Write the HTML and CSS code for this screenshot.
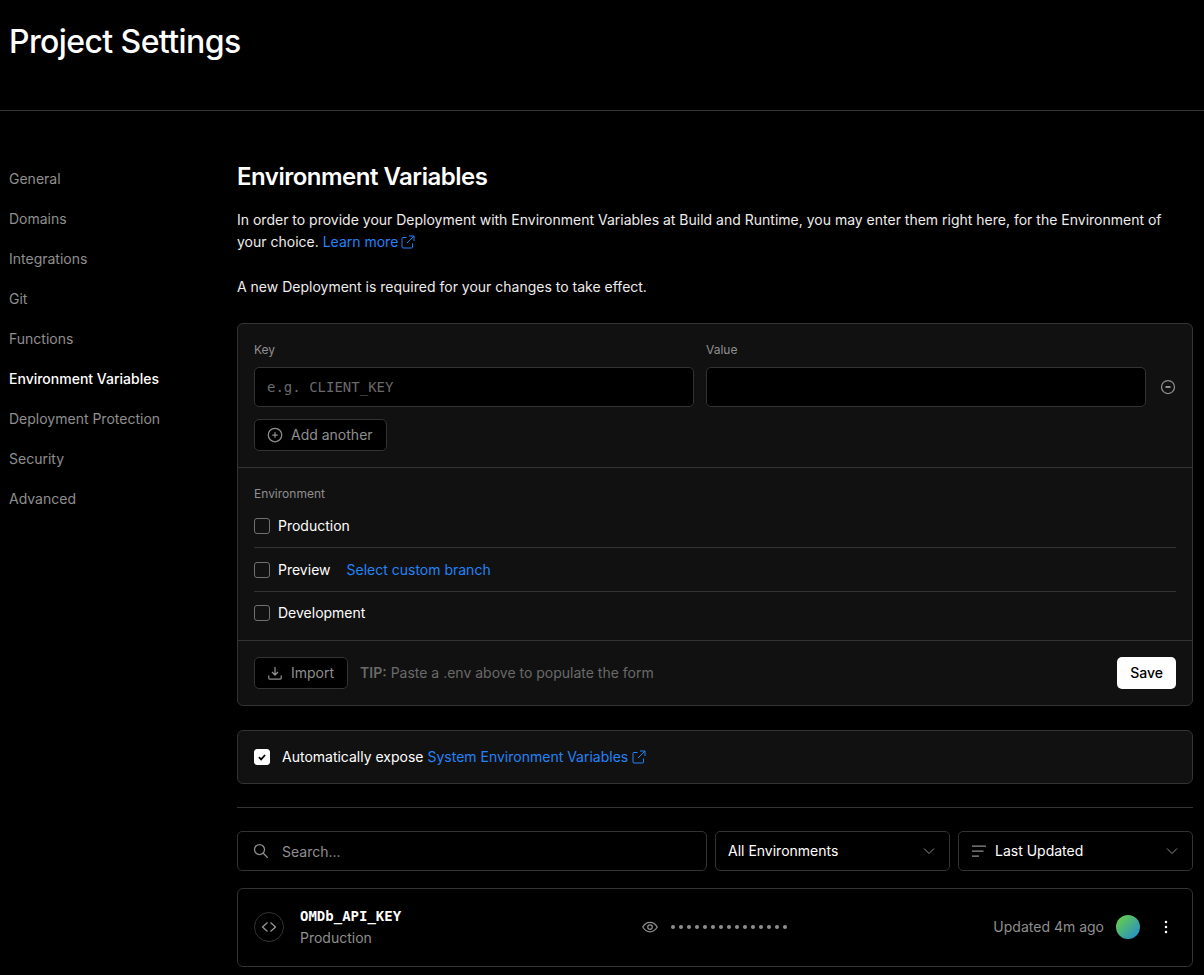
FILE: index.html
```html
<!DOCTYPE html>
<html lang="en">
  <head>
    <meta charset="UTF-8" />
    <meta name="viewport" content="width=device-width, initial-scale=1.0" />
    <title>Project Settings</title>
    <link rel="stylesheet" href="styles.css">
  </head>

  <body>
    <header class="page-head">
      <h1>Project Settings</h1>
    </header>

    <div class="layout">
      <nav class="sidenav">
        <a href="#">General</a>
        <a href="#">Domains</a>
        <a href="#">Integrations</a>
        <a href="#">Git</a>
        <a href="#">Functions</a>
        <a href="#" class="active">Environment Variables</a>
        <a href="#">Deployment Protection</a>
        <a href="#">Security</a>
        <a href="#">Advanced</a>
      </nav>

      <main class="content">
        <h2>Environment Variables</h2>
        <p class="intro">
          In order to provide your Deployment with Environment Variables at Build and Runtime, you may enter them right here, for the Environment of<br />
          your choice.
          <a href="#" class="link">Learn more <svg class="ext" viewBox="0 0 16 16"><path d="M6.5 3.5H3a1 1 0 0 0-1 1V13a1 1 0 0 0 1 1h8.5a1 1 0 0 0 1-1V9.5M9 2h5v5M14 2 7 9"/></svg></a>
        </p>
        <p class="intro note">A new Deployment is required for your changes to take effect.</p>

        <section class="card">
          <div class="fields">
            <div class="field-row">
              <div class="field">Key <div class="mono-input empty">e.g. CLIENT_KEY</div></div>
              <div class="field">Value <div class="mono-input"></div></div>
              <svg class="remove" viewBox="0 0 16 16"><circle cx="8" cy="8" r="6.5"/><path class="minus" d="M5.5 8h5"/></svg>
            </div>
            <button class="btn" type="button">
              <svg class="icon" viewBox="0 0 16 16"><circle cx="8" cy="8" r="6.75"/><path d="M8 5.25v5.5M5.25 8h5.5"/></svg>
              Add another
            </button>
          </div>

          <div class="envs">
            <div class="small-label">Environment</div>
            <div class="env-row"><span class="check"></span>Production</div>
            <div class="env-row"><span class="check"></span>Preview <a href="#" class="link branch">Select custom branch</a></div>
            <div class="env-row last"><span class="check"></span>Development</div>
          </div>

          <div class="card-foot">
            <button class="btn import" type="button">
              <svg class="icon" viewBox="0 0 16 16"><path d="M8 2v7.5M5 7l3 3 3-3M1.75 10.5v2.5a1 1 0 0 0 1 1h10.5a1 1 0 0 0 1-1v-2.5"/></svg>
              Import
            </button>
            <span class="tip"><b>TIP:</b> Paste a .env above to populate the form</span>
            <button class="save" type="button">Save</button>
          </div>
        </section>

        <section class="card expose">
          <span class="check on"><svg viewBox="0 0 16 16"><path d="M4.5 8.25 7 10.75l4.5-5"/></svg></span>
          Automatically expose&nbsp;<a href="#" class="link">System Environment Variables <svg class="ext" viewBox="0 0 16 16"><path d="M6.5 3.5H3a1 1 0 0 0-1 1V13a1 1 0 0 0 1 1h8.5a1 1 0 0 0 1-1V9.5M9 2h5v5M14 2 7 9"/></svg></a>
        </section>

        <hr class="rule" />

        <div class="filters">
          <label class="search">
            <svg class="icon" viewBox="0 0 16 16"><circle cx="6.5" cy="6.5" r="5"/><path d="m10.25 10.25 4.5 4.5"/></svg>
            <input type="text" placeholder="Search..." />
          </label>
          <div class="select">
            All Environments
            <svg class="chev" viewBox="0 0 16 16"><path d="M3 5.5 8 10.5 13 5.5"/></svg>
          </div>
          <div class="select">
            <svg class="icon" viewBox="0 0 16 16"><path d="M1 3h14M1 8h11.5M1 13h7"/></svg>
            <span class="select-text">Last Updated</span>
            <svg class="chev" viewBox="0 0 16 16"><path d="M3 5.5 8 10.5 13 5.5"/></svg>
          </div>
        </div>

        <div class="var-row">
          <span class="code-badge"><svg viewBox="0 0 16 16"><path d="M6.5 3.5 1.5 8l5 4.5M9.5 3.5l5 4.5-5 4.5"/></svg></span>
          <div class="var-name">
            <strong>OMDb_API_KEY</strong>
            <span>Production</span>
          </div>
          <div class="var-value">
            <svg class="icon" viewBox="0 0 16 16"><path d="M.75 8S3.5 3.25 8 3.25 15.25 8 15.25 8 12.5 12.75 8 12.75.75 8 .75 8Z"/><circle cx="8" cy="8" r="2.25"/></svg>
            <span class="dots">
              <i></i><i></i><i></i><i></i><i></i><i></i><i></i><i></i><i></i><i></i><i></i><i></i><i></i><i></i><i></i>
            </span>
          </div>
          <div class="var-meta">
            <span>Updated 4m ago</span>
            <span class="avatar"></span>
            <svg class="more" viewBox="0 0 16 16"><circle cx="8" cy="3" r="1.25"/><circle cx="8" cy="8" r="1.25"/><circle cx="8" cy="13" r="1.25"/></svg>
          </div>
        </div>
      </main>
    </div>
  </body>
</html>
```

FILE: styles.css
```css
* {
  box-sizing: border-box;
}

body {
  margin: 0;
  background: #000;
  color: #ededed;
  font-family: Inter, "Liberation Sans", sans-serif;
  font-size: 14px;
  line-height: 20px;
}

a {
  text-decoration: none;
}

svg {
  fill: none;
  stroke: currentColor;
  stroke-width: 1.25;
  flex-shrink: 0;
}

.page-head {
  height: 111px;
  padding: 20px 9px 0;
  border-bottom: 1px solid #333;
}

.page-head h1 {
  margin: 0;
  font-size: 32px;
  line-height: 44px;
  font-weight: 500;
  letter-spacing: -0.6px;
  color: #fff;
}

.layout {
  display: flex;
  padding: 48px 11px 0 9px;
}

.sidenav {
  width: 228px;
  flex-shrink: 0;
  display: flex;
  flex-direction: column;
}

.sidenav a {
  height: 40px;
  line-height: 40px;
  color: #8f8f8f;
}

.sidenav a.active {
  color: #fff;
  font-weight: 500;
}

.content {
  flex: 1;
  min-width: 0;
}

.content h2 {
  margin: 0 0 14px;
  font-size: 24px;
  line-height: 36px;
  font-weight: 600;
  letter-spacing: -0.5px;
  color: #fff;
}

.intro {
  margin: 0;
  line-height: 22px;
  color: #ededed;
}

.note {
  margin-top: 23px;
}

.link {
  color: #2483f7;
}

.ext {
  width: 16px;
  height: 16px;
  margin-left: -1px;
  vertical-align: -3px;
  stroke-width: 1;
}

.intro .ext {
  margin-left: -2px;
}

.card {
  background: #111;
  border: 1px solid #333;
  border-radius: 6px;
}

.note + .card {
  margin-top: 25px;
}

.fields {
  padding: 17px 16px 16px;
  border-bottom: 1px solid #333;
}

.field-row {
  display: flex;
  align-items: flex-end;
  gap: 12px;
}

.field {
  flex: 1;
  display: flex;
  flex-direction: column;
  gap: 8px;
  font-size: 12px;
  line-height: 18px;
  color: #8f8f8f;
}

.mono-input {
  display: flex;
  align-items: center;
  height: 40px;
  padding: 0 12px;
  background: #000;
  border: 1px solid #333;
  border-radius: 5px;
  color: #ededed;
  font-family: "DejaVu Sans Mono", monospace;
  font-size: 14px;
  line-height: 20px;
}

.mono-input.empty {
  color: #6a6a6a;
}

.remove {
  width: 16px;
  height: 16px;
  margin: 0 0 12px 2px;
  color: #8f8f8f;
}

.minus {
  stroke-width: 2;
}

.icon {
  width: 16px;
  height: 16px;
}

.btn {
  display: inline-flex;
  align-items: center;
  gap: 8px;
  height: 32px;
  margin-top: 12px;
  padding: 0 13px 1px 12px;
  background: #000;
  border: 1px solid #333;
  border-radius: 5px;
  color: #8f8f8f;
  font-family: inherit;
  font-size: 14px;
}

.envs {
  padding: 16px 16px 0;
  border-bottom: 1px solid #333;
}

.small-label {
  font-size: 12px;
  line-height: 20px;
  color: #8f8f8f;
}

.env-row {
  display: flex;
  align-items: center;
  height: 44px;
  border-bottom: 1px solid #333;
  color: #fff;
}

.env-row.last {
  height: 48px;
  padding-bottom: 7px;
  border-bottom: none;
}

.check {
  width: 16px;
  height: 16px;
  margin-right: 8px;
  border: 1px solid #707070;
  border-radius: 3px;
  flex-shrink: 0;
}

.check.on {
  background: #fff;
  border-color: #fff;
  color: #000;
  margin-right: 12px;
}

.check.on svg {
  display: block;
  width: 14px;
  height: 14px;
  stroke-width: 2;
}

.branch {
  margin-left: 16px;
}

.card-foot {
  display: flex;
  align-items: center;
  padding: 16px;
}

.import {
  margin: 0 12px 0 0;
}

.tip {
  color: #6a6a6a;
}

.tip b {
  font-weight: 600;
}

.save {
  margin-left: auto;
  height: 32px;
  padding: 0 13px 1px;
  background: #fff;
  border: none;
  border-radius: 5px;
  color: #000;
  font-family: inherit;
  font-size: 14px;
  font-weight: 500;
}

.expose {
  display: flex;
  align-items: center;
  height: 54px;
  margin-top: 24px;
  padding: 0 16px;
  color: #fff;
}

.rule {
  height: 1px;
  margin: 23px 0;
  border: none;
  background: #333;
}

.filters {
  display: flex;
  gap: 8px;
}

.search {
  flex: 1;
  display: flex;
  align-items: center;
  gap: 13px;
  height: 40px;
  padding: 0 12px 0 15px;
  border: 1px solid #333;
  border-radius: 5px;
  color: #8f8f8f;
}

.search input {
  flex: 1;
  min-width: 0;
  background: none;
  border: none;
  outline: none;
  padding: 2px 0 0;
  color: #ededed;
  font-family: inherit;
  font-size: 14px;
  line-height: 20px;
}

.search input::placeholder {
  color: #8f8f8f;
}

.select {
  display: flex;
  align-items: center;
  width: 235px;
  height: 40px;
  padding: 0 12px;
  border: 1px solid #333;
  border-radius: 5px;
  color: #fff;
}

.select .icon {
  margin-right: 8px;
  color: #8f8f8f;
}

.chev {
  width: 16px;
  height: 16px;
  margin-left: auto;
  color: #8f8f8f;
  stroke-width: 1;
}

.var-row {
  display: flex;
  align-items: center;
  height: 79px;
  margin-top: 17px;
  padding: 0 16px 1px;
  border: 1px solid #333;
  border-radius: 6px;
}

.code-badge {
  display: flex;
  align-items: center;
  justify-content: center;
  width: 30px;
  height: 30px;
  margin-right: 16px;
  border: 1px solid #333;
  border-radius: 50%;
  color: #999;
}

.code-badge svg {
  width: 16px;
  height: 16px;
}

.var-name {
  width: 342px;
  padding-bottom: 1px;
  display: flex;
  flex-direction: column;
  gap: 2px;
}

.var-name strong {
  font-family: "DejaVu Sans Mono", monospace;
  font-weight: 700;
  color: #fff;
}

.var-name span {
  color: #8f8f8f;
}

.var-value {
  display: flex;
  align-items: center;
  gap: 13px;
  color: #8f8f8f;
}

.dots {
  display: flex;
  gap: 4px;
}

.dots i {
  width: 4px;
  height: 4px;
  border-radius: 50%;
  background: #8f8f8f;
}

.var-meta {
  display: flex;
  align-items: center;
  gap: 12px;
  margin-left: auto;
  color: #8f8f8f;
}

.avatar {
  width: 24px;
  height: 24px;
  border-radius: 50%;
  background: linear-gradient(135deg, #6ed53a, #1f86d8);
}

.more {
  width: 16px;
  height: 16px;
  margin: 0 2px 0 6px;
  fill: #fff;
  stroke: none;
}
```
